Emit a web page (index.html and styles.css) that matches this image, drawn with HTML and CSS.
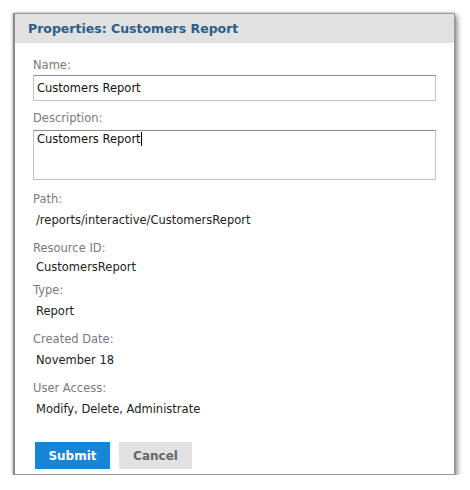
FILE: index.html
```html
<!DOCTYPE html>
<html lang="en">
<head>
  <meta charset="UTF-8" />
  <meta name="viewport" content="width=device-width, initial-scale=1.0" />
  <title>Properties</title>
  <link rel="stylesheet" href="styles.css">
</head>
<body>
  <div class="dialog">
    <div class="dialog-header">Properties: Customers Report</div>
    <div class="dialog-body">
      <div class="field first">
        <label class="field-label" for="name">Name:</label>
        <input class="text-input" type="text" id="name" value="Customers Report" />
      </div>

      <div class="field area">
        <label class="field-label">Description:</label>
        <div class="text-area">Customers Report<span class="caret"></span></div>
      </div>

      <div class="field">
        <div class="field-label">Path:</div>
        <div class="field-value">/reports/interactive/CustomersReport</div>
      </div>

      <div class="field">
        <div class="field-label">Resource ID:</div>
        <div class="field-value tight">CustomersReport</div>
      </div>

      <div class="field close">
        <div class="field-label">Type:</div>
        <div class="field-value">Report</div>
      </div>

      <div class="field">
        <div class="field-label">Created Date:</div>
        <div class="field-value">November 18</div>
      </div>

      <div class="field">
        <div class="field-label">User Access:</div>
        <div class="field-value">Modify, Delete, Administrate</div>
      </div>

      <div class="actions">
        <button class="btn btn-submit">Submit</button>
        <button class="btn btn-cancel">Cancel</button>
      </div>
    </div>
  </div>
</body>
</html>
```

FILE: styles.css
```css
body {
  margin: 0;
  background: #fff;
  font-family: "DejaVu Sans", Verdana, sans-serif;
  font-size: 11.5px;
  color: #222;
}

.dialog {
  margin: 13px 0 0 13px;
  width: 442px;
  height: 462px;
  box-sizing: border-box;
  background: #fff;
  border: 1px solid #999;
  border-left: 2px solid #8a8a8a;
  box-shadow: 0 0 3px rgba(0, 0, 0, 0.35), 3px 3px 5px rgba(0, 0, 0, 0.35);
}

.dialog-header {
  height: 29px;
  line-height: 30px;
  padding-left: 13px;
  background: #e1e1e1;
  color: #2c5d8b;
  font-weight: bold;
  font-size: 12.5px;
}

.dialog-body {
  padding: 15px 18px 0 18px;
}

.field {
  margin-top: 14px;
}

.field.first {
  margin-top: 0;
}

.field.area {
  margin-top: 10px;
}

.field.close {
  margin-top: 9px;
}

.field-label {
  display: block;
  line-height: 14px;
  color: #7a7a7a;
  margin-bottom: 7px;
}

.field.first .field-label {
  margin-bottom: 3px;
}

.field.area .field-label {
  margin-bottom: 5px;
}

.field-value {
  line-height: 14px;
  padding-left: 3px;
  color: #222;
}

.field-label + .tight {
  margin-top: -2px;
}

.text-input,
.text-area {
  display: block;
  width: 100%;
  box-sizing: border-box;
  border: 1px solid #c2c2c2;
  border-top-color: #8c8c8c;
  font-family: inherit;
  font-size: inherit;
  color: #111;
  padding: 0 3px;
  margin: 0;
  outline: none;
}

.text-input {
  height: 26px;
}

.text-area {
  height: 50px;
  padding-top: 1px;
  line-height: 15px;
  margin-bottom: -2px;
}

.caret {
  display: inline-block;
  width: 1px;
  height: 14px;
  background: #000;
  vertical-align: -3px;
}

.actions {
  display: flex;
  gap: 9px;
  margin-top: 26px;
  padding-left: 2px;
}

.btn {
  height: 27px;
  border: none;
  border-radius: 0;
  font-family: inherit;
  font-size: 12px;
  font-weight: bold;
  cursor: pointer;
}

.btn-submit {
  width: 75px;
  background: #1685d7;
  color: #fff;
}

.btn-cancel {
  width: 73px;
  background: #e2e2e2;
  color: #666;
}
```
